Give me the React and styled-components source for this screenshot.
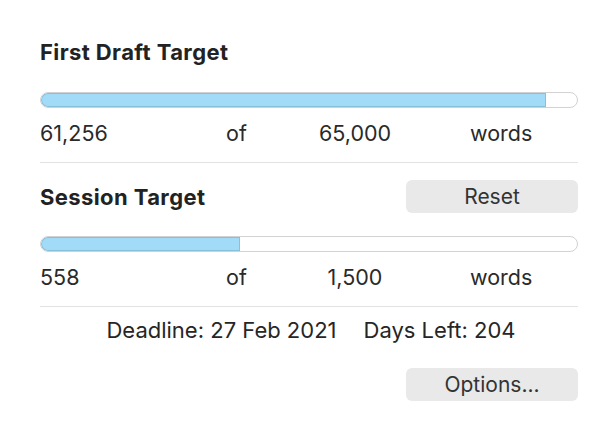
import React from 'react'
import styled, { createGlobalStyle } from 'styled-components'

const Global = createGlobalStyle`
  body {
    margin: 0;
    background: #fff;
    font-family: Inter, "Liberation Sans", sans-serif;
    color: #262626;
  }
`

const Panel = styled.section`
  width: 538px;
  padding: 38px 38px 0 40px;
`

const Title = styled.h3`
  margin: 0;
  font-size: 22px;
  font-weight: 700;
  letter-spacing: 0.4px;
  color: #222;
  line-height: 28px;
`

const Header = styled.div`
  display: flex;
  align-items: center;
  justify-content: space-between;
  height: 33px;
  margin-top: 17px;
`

const Button = styled.button`
  width: 172px;
  height: 33px;
  border: none;
  border-radius: 6px;
  background: #e9e9e9;
  font-family: inherit;
  font-size: 21px;
  color: #333;
  padding: 0;
`

const Track = styled.div`
  height: 14px;
  border: 1px solid #d2d2d2;
  border-radius: 8px;
  background: #fff;
  overflow: hidden;
  display: flex;
  margin-top: ${p => p.$top}px;
`

const Fill = styled.div`
  height: 100%;
  background: #a1dbf8;
  box-shadow: inset 0 0 0 1px #89bfd9;
  border-radius: 8px 0 0 8px;
`

const Counts = styled.div`
  display: grid;
  grid-template-columns: 186px 74px 110px 1fr;
  align-items: center;
  height: 50px;
  margin-bottom: 4px;
  font-size: 21.5px;
  color: #2a2a2a;
`

const Centered = styled.span`
  text-align: center;
`

const Unit = styled.span`
  padding-left: 60px;
`

const Rule = styled.hr`
  margin: 0;
  border: none;
  border-top: 1px solid #e2e2e2;
`

const Deadline = styled.div`
  display: flex;
  justify-content: center;
  gap: 27px;
  height: 46px;
  align-items: center;
  font-size: 22px;
  color: #262626;
  padding-left: 4px;
`

const Footer = styled.div`
  display: flex;
  justify-content: flex-end;
  margin-top: 15px;
`

function Target({ done, goal, top }) {
  const pct = (done / goal) * 100
  return (
    <>
      <Track $top={top}>
        <Fill style={{ width: `${pct}%` }} />
      </Track>
      <Counts>
        <span>{done.toLocaleString('en-US')}</span>
        <span>of</span>
        <Centered>{goal.toLocaleString('en-US')}</Centered>
        <Unit>words</Unit>
      </Counts>
    </>
  )
}

export default function App() {
  return (
    <>
      <Global />
      <Panel>
        <Title>First Draft Target</Title>
        <Target done={61256} goal={65000} top={26} />
        <Rule />
        <Header>
          <Title>Session Target</Title>
          <Button>Reset</Button>
        </Header>
        <Target done={558} goal={1500} top={23} />
        <Rule />
        <Deadline>
          <span>Deadline: 27 Feb 2021</span>
          <span>Days Left: 204</span>
        </Deadline>
        <Footer>
          <Button>Options...</Button>
        </Footer>
      </Panel>
    </>
  )
}
